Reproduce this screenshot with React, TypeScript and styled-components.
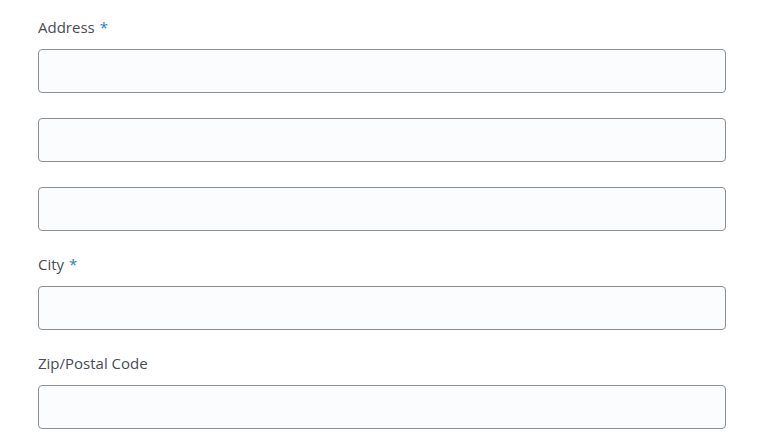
import styled, { createGlobalStyle } from 'styled-components';

const GlobalStyle = createGlobalStyle`
  body {
    margin: 0;
    background: #ffffff;
    font-family: "Open Sans", "Noto Sans", Arial, sans-serif;
  }
`;

const Form = styled.form`
  display: flex;
  flex-direction: column;
  gap: 23px;
  width: 688px;
  padding: 17px 0 0 38px;
`;

const Field = styled.div`
  display: flex;
  flex-direction: column;
  gap: 12px;
`;

const Stack = styled.div`
  display: flex;
  flex-direction: column;
  gap: 25px;
`;

const Label = styled.label`
  font-size: 15px;
  line-height: 20px;
  color: #474d53;
`;

const Required = styled.span`
  color: #2c7fb8;
  margin-left: 5px;
`;

const Input = styled.input`
  box-sizing: border-box;
  width: 100%;
  height: 44px;
  padding: 0 12px;
  border: 1px solid #8c8f94;
  border-radius: 4px;
  background: #fbfcfe;
  font-family: inherit;
  font-size: 15px;
  color: #2c3338;

  &:focus {
    outline: none;
    border-color: #2271b1;
  }
`;

export default function App() {
  return (
    <>
      <GlobalStyle />
      <Form>
        <Field>
          <Label htmlFor="address1">
            Address<Required>*</Required>
          </Label>
          <Stack>
            <Input id="address1" type="text" />
            <Input id="address2" type="text" />
            <Input id="address3" type="text" />
          </Stack>
        </Field>

        <Field>
          <Label htmlFor="city">
            City<Required>*</Required>
          </Label>
          <Input id="city" type="text" />
        </Field>

        <Field>
          <Label htmlFor="zip">Zip/Postal Code</Label>
          <Input id="zip" type="text" />
        </Field>
      </Form>
    </>
  );
}
